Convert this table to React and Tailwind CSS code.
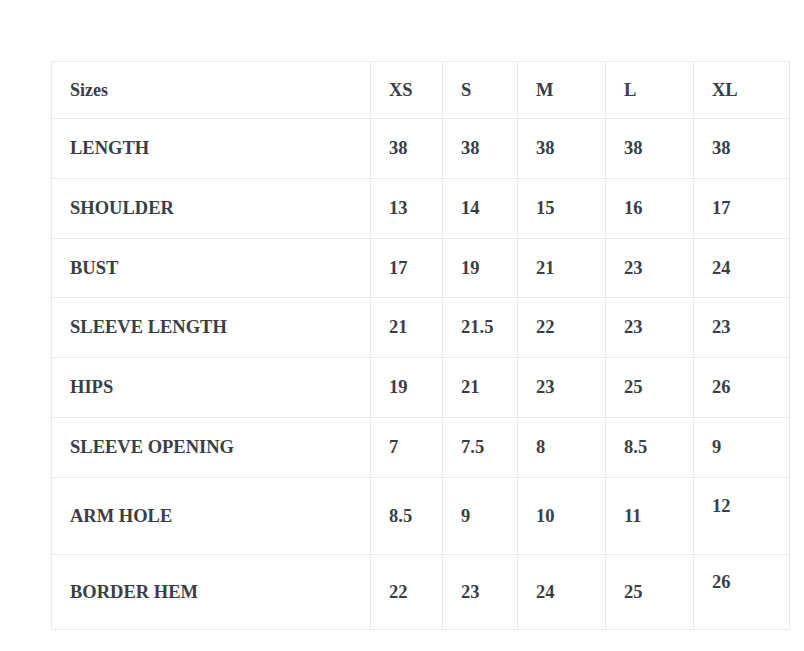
import React from "react";

const cols = ["XS", "S", "M", "L", "XL"];
const rows = [
  { name: "LENGTH", vals: ["38", "38", "38", "38", "38"], h: "h-[60px]" },
  { name: "SHOULDER", vals: ["13", "14", "15", "16", "17"], h: "h-[60px]" },
  { name: "BUST", vals: ["17", "19", "21", "23", "24"], h: "h-[59px]" },
  { name: "SLEEVE LENGTH", vals: ["21", "21.5", "22", "23", "23"], h: "h-[60px]" },
  { name: "HIPS", vals: ["19", "21", "23", "25", "26"], h: "h-[60px]" },
  { name: "SLEEVE OPENING", vals: ["7", "7.5", "8", "8.5", "9"], h: "h-[60px]" },
  { name: "ARM HOLE", vals: ["8.5", "9", "10", "11", "12"], h: "h-[77px]", lift: true },
  { name: "BORDER HEM", vals: ["22", "23", "24", "25", "26"], h: "h-[75px]", lift: true },
];

const cell = "border border-[#e9e9e9] pl-[18px] pr-2 align-middle text-left";

export default function App() {
  return (
    <div className="w-[804px] h-[651px] bg-white overflow-hidden pt-[61px] pl-[51px] font-['Liberation_Serif',serif] font-bold text-[18.5px] text-[#3a3e46] leading-none">
      <table className="border-collapse table-fixed w-[738px]">
        <colgroup>
          <col className="w-[319px]" />
          <col className="w-[72px]" />
          <col className="w-[75px]" />
          <col className="w-[88px]" />
          <col className="w-[88px]" />
          <col className="w-[96px]" />
        </colgroup>
        <thead>
          <tr className="h-[57px]">
            <th className={`${cell} font-bold text-[18px]`}>Sizes</th>
            {cols.map((c) => (
              <th key={c} className={`${cell} font-bold`}>{c}</th>
            ))}
          </tr>
        </thead>
        <tbody>
          {rows.map((r) => (
            <tr key={r.name} className={r.h}>
              <td className={cell}>{r.name}</td>
              {r.vals.map((v, i) => (
                <td key={i} className={cell}>
                  {r.lift && i === 4 ? <div className="pb-[20px]">{v}</div> : v}
                </td>
              ))}
            </tr>
          ))}
        </tbody>
      </table>
    </div>
  );
}
